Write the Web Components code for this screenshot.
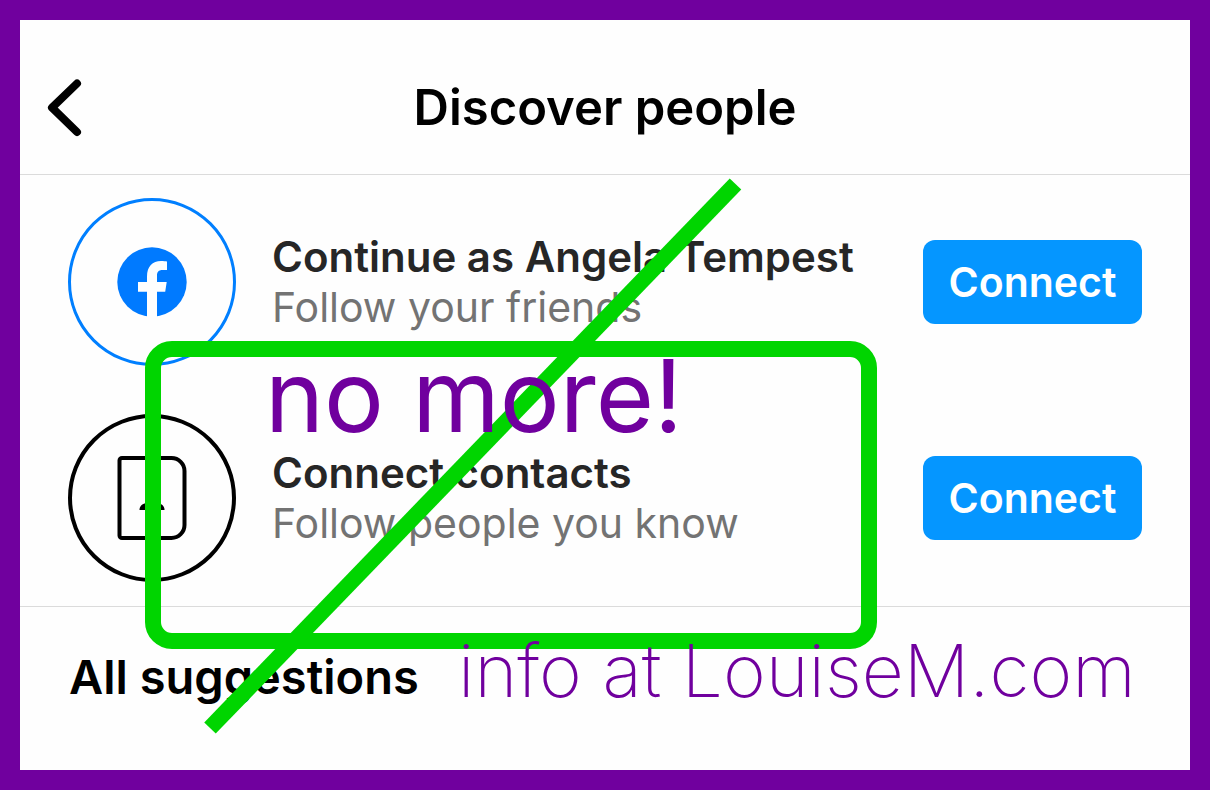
<!DOCTYPE html>
<html lang="en">
<head>
<meta charset="utf-8">
<meta name="viewport" content="width=device-width, initial-scale=1">
<title>Discover people</title>
<style>
  body { margin: 0; background: #fefefe; font-family: Inter, "Liberation Sans", sans-serif; }
</style>
</head>
<body>
<discover-screen>
  <screen-header>Discover people</screen-header>
  <connect-list>
    <connect-row>
      <facebook-badge slot="icon"></facebook-badge>
      <span slot="title">Continue as Angela Tempest</span>
      <span slot="detail">Follow your friends</span>
    </connect-row>
    <connect-row>
      <contacts-badge slot="icon"></contacts-badge>
      <span slot="title">Connect contacts</span>
      <span slot="detail">Follow people you know</span>
    </connect-row>
  </connect-list>
  <section-title>All suggestions</section-title>
  <strike-note slot="overlay">
    <span slot="callout">no more!</span>
    <span slot="credit">info at LouiseM.com</span>
  </strike-note>
</discover-screen>

<script>
const define = (name, markup) => customElements.define(name, class extends HTMLElement {
  constructor() {
    super();
    this.attachShadow({ mode: "open" }).innerHTML = markup;
  }
});

define("discover-screen", `
  <style>
    :host { display: block; position: relative; box-sizing: border-box; min-height: 100vh; border: 20px solid #70009e; background: #fefefe; }
  </style>
  <main><slot></slot></main>
  <slot name="overlay"></slot>`);

define("screen-header", `
  <style>
    :host { display: block; }
    header { display: grid; grid-template-columns: 1fr auto 1fr; align-items: center; padding: 48px 24px 26px; }
    button { justify-self: start; display: block; width: 40px; height: 80px; padding: 0; border: 0; background: none; cursor: pointer; }
    svg { display: block; }
    h1 { margin: 0; font-size: 49px; line-height: 60px; font-weight: 600; color: #000; }
  </style>
  <header>
    <button type="button" aria-label="Back">
      <svg width="40" height="80" viewBox="0 0 40 80" fill="none" stroke="#000" stroke-width="8" stroke-linecap="round" stroke-linejoin="round"><path d="M33 15.5 8 39.7l25 24.3"/></svg>
    </button>
    <h1><slot></slot></h1>
  </header>`);

define("connect-list", `
  <style>
    :host { display: flex; flex-direction: column; gap: 48px; padding: 23px 48px 24px; border: solid #dbdbdb; border-width: 1px 0; }
  </style>
  <slot></slot>`);

define("connect-row", `
  <style>
    :host { display: flex; align-items: center; gap: 36px; }
    .text { flex: 1; min-width: 0; line-height: 51px; }
    .title { font-size: 42px; font-weight: 600; color: #262626; }
    .detail { font-size: 41px; color: #737373; }
    button { box-sizing: border-box; width: 219px; height: 84px; padding: 0; border: 0; border-radius: 12px; background: #0596ff; color: #fff; font: 600 41px/84px Inter, "Liberation Sans", sans-serif; cursor: pointer; }
  </style>
  <slot name="icon"></slot>
  <div class="text">
    <div class="title"><slot name="title"></slot></div>
    <div class="detail"><slot name="detail"></slot></div>
  </div>
  <button type="button">Connect</button>`);

define("facebook-badge", `
  <style>:host { display: block; } svg { display: block; }</style>
  <svg width="168" height="168" viewBox="0 0 168 168" aria-hidden="true">
    <circle cx="84" cy="84" r="82.5" fill="none" stroke="#007fff" stroke-width="3"/>
    <circle cx="84" cy="84" r="34.7" fill="#007aff"/>
    <path fill="#fefefe" d="M79 120V93.700h-9V84h9v-5.500C79 68.500 84.500 63 93 63c2.500 0 4.500.2 6 .5V72h-4.500c-4 0-5.500 2.200-5.500 5.500V84h9.700l-1.500 9.700H89V120z"/>
  </svg>`);

define("contacts-badge", `
  <style>:host { display: block; } svg { display: block; }</style>
  <svg width="168" height="168" viewBox="0 0 168 168" aria-hidden="true">
    <g fill="none" stroke="#000" stroke-width="4">
      <circle cx="84" cy="84" r="82"/>
      <path d="M54 44h49.500a13 13 0 0 1 13 13v54a13 13 0 0 1-13 13H54a2.500 2.500 0 0 1-2.500-2.500v-75A2.500 2.500 0 0 1 54 44z"/>
    </g>
    <path d="M71.500 96c0-4 3-6.500 6-6.500h13c3 0 6 2.500 6 6.500z"/>
  </svg>`);

define("section-title", `
  <style>
    :host { display: block; padding: 40px 49px; }
    h2 { margin: 0; font-size: 47px; line-height: 60px; font-weight: 600; color: #000; }
  </style>
  <h2><slot></slot></h2>`);

define("strike-note", `
  <style>
    :host { display: block; position: absolute; inset: 0; overflow: hidden; pointer-events: none; color: #70009e; }
    svg, .callout, .credit { position: absolute; white-space: nowrap; }
    svg { left: 0; top: 0; }
    .callout { left: 245px; top: 326px; font: 400 100px/100px Inter, sans-serif; }
    .credit { left: 438px; top: 606px; font: 200 73px/90px Inter, sans-serif; }
  </style>
  <svg width="870" height="720" viewBox="20 20 870 720" fill="none" stroke="#00d500" stroke-width="16" aria-hidden="true">
    <rect x="153" y="349" width="716" height="292" rx="19"/>
    <path d="M735.500 184 210 728"/>
  </svg>
  <div class="callout"><slot name="callout"></slot></div>
  <div class="credit"><slot name="credit"></slot></div>`);
</script>
</body>
</html>
